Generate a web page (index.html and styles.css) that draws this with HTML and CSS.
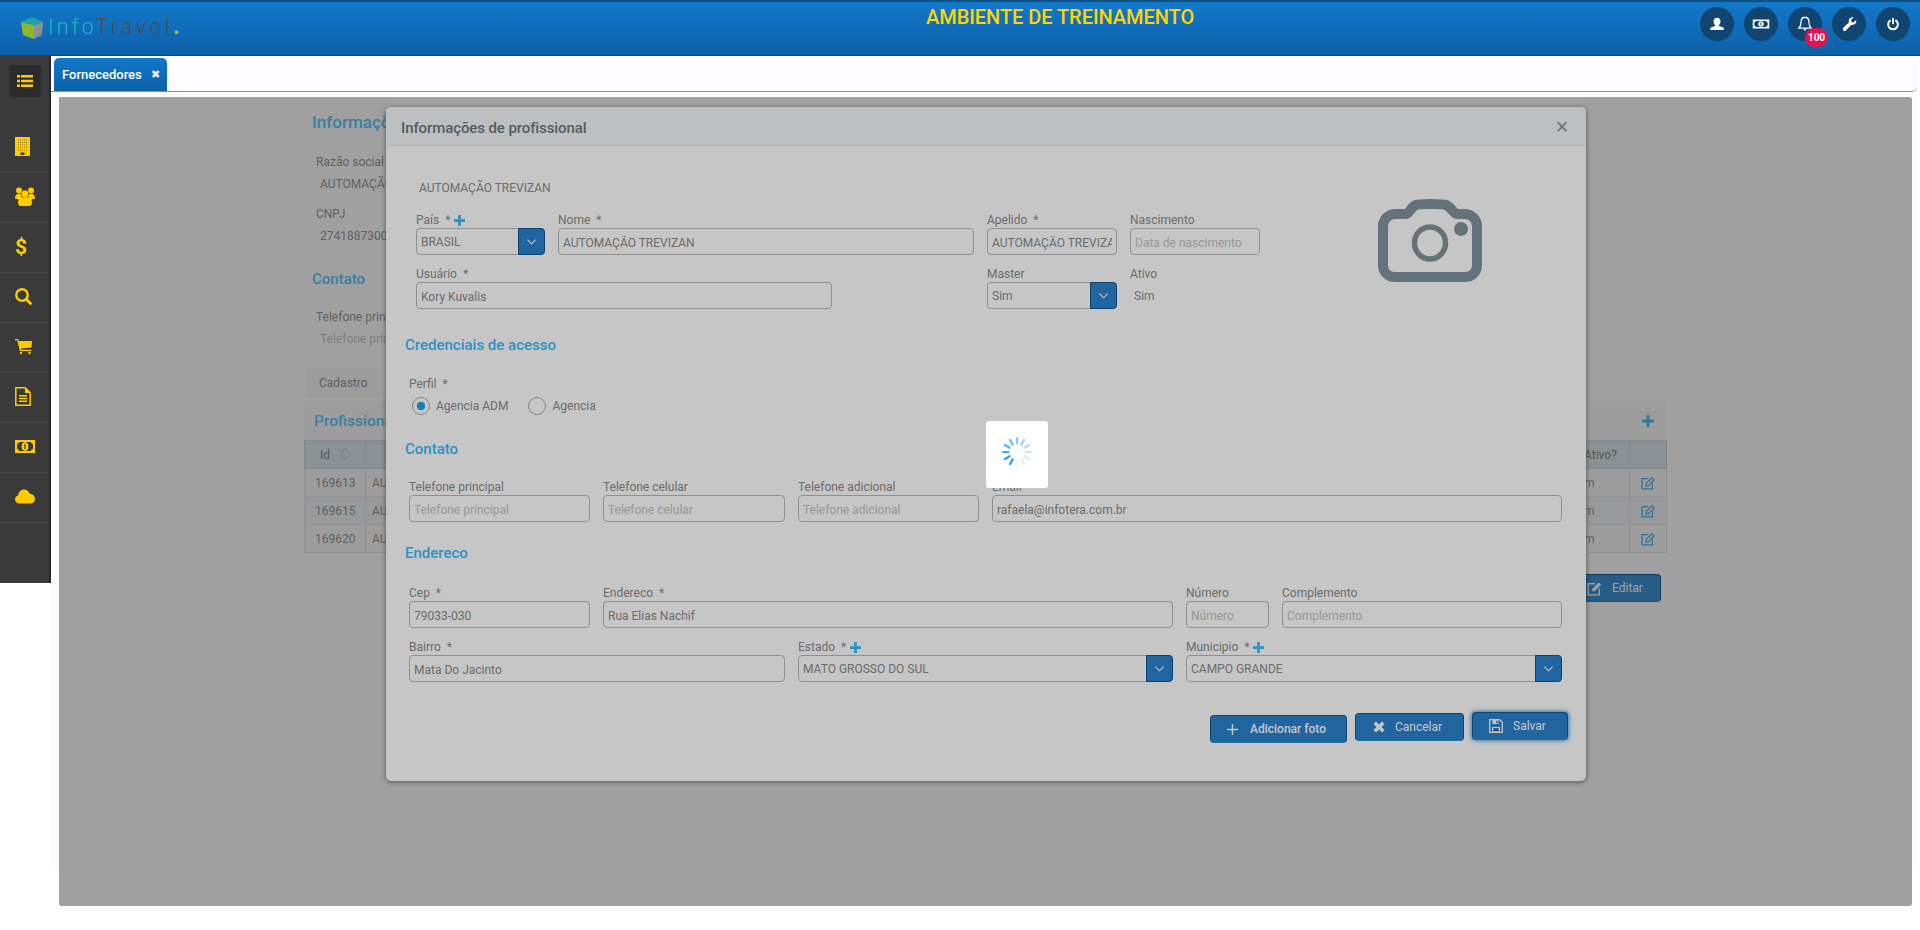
FILE: index.html
```html
<!DOCTYPE html>
<html lang="pt-BR">
<head>
    <meta charset="UTF-8">
    <title>InfoTravel - Fornecedores</title>
    <link rel="stylesheet" href="styles.css">
</head>
<body>
    <header class="topbar">
        <div class="logo">
            <svg class="logo-cube" viewBox="0 0 24 24">
                <path d="M1 6l13 3v14L3 19z" fill="#8fb82c"/>
                <path d="M14 9l9-3-1 13-8 4z" fill="#8b9097"/>
                <path d="M1 6l11-5 11 5-9 3z" fill="#1ea5a6"/>
            </svg>
            <span class="logo-text"><span class="logo-info">Info</span><span class="logo-travel">Travel</span><span class="logo-dot">.</span></span>
        </div>
        <div class="env-title">AMBIENTE DE TREINAMENTO</div>
        <div class="top-actions">
            <a class="round-btn">
                <svg viewBox="0 0 24 24"><path fill="#fff" d="M12 3.500c-3 0-4.600 2.200-4.600 5 0 2 .8 3.700 2.100 4.800v1.500c-2.500 1-6 1.700-6.500 3v2.200h18v-2.200c-.5-1.300-4-2-6.500-3v-1.500c1.300-1.100 2.100-2.800 2.100-4.800 0-2.800-1.600-5-4.600-5z"/></svg>
            </a>
            <a class="round-btn">
                <svg viewBox="0 0 24 24"><path fill="#fff" fill-rule="evenodd" d="M1 6h22v12H1zM5 8c0 1-1 2-2 2v4c1 0 2 1 2 2h14c0-1 1-2 2-2v-4c-1 0-2-1-2-2z"/><circle cx="12" cy="12" r="3.600" fill="#fff"/><path d="M12 10v4" stroke="#0f4570" stroke-width="1.400"/></svg>
            </a>
            <a class="round-btn has-badge">
                <svg viewBox="0 0 24 24"><path fill="none" stroke="#fff" stroke-width="1.700" d="M12 3c-3.500 0-5.200 2.600-5.200 6 0 4-1 6.500-3 8.500h16.400c-2-2-3-4.500-3-8.500 0-3.400-1.700-6-5.200-6z"/><path fill="#fff" d="M10 18.500h4c0 1.200-.9 2-2 2s-2-.8-2-2z"/></svg>
                <span class="badge">100</span>
            </a>
            <a class="round-btn">
                <svg viewBox="0 0 24 24"><path fill="#fff" d="M21.500 6.500c.6 2.300-.1 4.300-1.700 5.600-1.500 1.200-3.300 1.300-4.800.8L8 20.500c-1 1-2.600 1-3.600 0-1-1-1-2.600 0-3.600l7.600-7.300c-.5-1.500-.3-3.400.9-4.800 1.300-1.600 3.400-2.300 5.500-1.700L14.800 6.700l.6 2.600 2.600.6z"/></svg>
            </a>
            <a class="round-btn">
                <svg viewBox="0 0 24 24"><path fill="none" stroke="#fff" stroke-width="2.600" stroke-linecap="round" d="M12 5v6M8 7.500a6.500 6.500 0 1 0 8 0"/></svg>
            </a>
        </div>
    </header>

    <div class="layout">
        <nav class="sidebar">
            <div class="menu-toggle">
                <svg viewBox="0 0 16 12"><path fill="#ffcc00" d="M0 0h3v2.400H0zM4 0h12v2.400H4zM0 4.800h3v2.400H0zM4 4.800h12v2.400H4zM0 9.600h3V12H0zM4 9.600h12V12H4z"/></svg>
            </div>
            <a class="side-item">
                <svg class="ic-building" viewBox="0 0 15 19"><path fill="#ffcc00" d="M0 0h15v19H0z"/><path stroke="#8a7320" stroke-width="1" stroke-dasharray="1 1" d="M3 3h9M3 5.500h9M3 8h9M3 10.500h9M3 13h9"/><path fill="#3a3a3a" d="M5.500 15.500h4V18h-4z"/></svg>
            </a>
            <a class="side-item">
                <svg class="ic-users" viewBox="0 0 20 19"><g fill="#ffcc00"><circle cx="4" cy="3.500" r="3"/><circle cx="16" cy="3.500" r="3"/><path d="M0 12c0-3 1-5 3-5h14c2 0 3 2 3 5h-3v1H3v-1z"/><circle cx="10" cy="7" r="4" stroke="#3a3a3a" stroke-width=".6"/><path d="M3 16c0-3.500 1.500-5.500 4-5.500h6c2.500 0 4 2 4 5.500 0 2-1.500 3-3 3H6c-1.500 0-3-1-3-3z"/></g></svg>
            </a>
            <a class="side-item"><span class="side-dollar">$</span></a>
            <a class="side-item">
                <svg class="ic-search" viewBox="0 0 17 17"><path fill="none" stroke="#ffcc00" stroke-width="2.400" d="M7 1.300a5.700 5.700 0 1 0 0 11.400A5.700 5.700 0 0 0 7 1.300z"/><path stroke="#ffcc00" stroke-width="2.800" stroke-linecap="round" d="M11.500 11.500l4 4"/></svg>
            </a>
            <a class="side-item">
                <svg class="ic-cart" viewBox="0 0 17 15"><path fill="#ffcc00" d="M0 0h3l.6 2H17l-.6 6.500-10.400 1 .3 1.200h10v1.300H4.800L2.300 1.300H0z"/><circle cx="6" cy="14" r="1.200" fill="#ffcc00"/><circle cx="14.500" cy="14" r="1.200" fill="#ffcc00"/></svg>
            </a>
            <a class="side-item">
                <svg class="ic-file" viewBox="0 0 16 19"><path fill="none" stroke="#ffcc00" stroke-width="1.500" d="M.8.800h9.500l4.900 5v12.400H.8z"/><path fill="#ffcc00" d="M10 1l5 5h-5zM4 8h8v1.500H4zM4 10.800h8v1.500H4zM4 13.600h8v1.500H4z"/></svg>
            </a>
            <a class="side-item">
                <svg class="ic-money" viewBox="0 0 20 13"><path fill="#ffcc00" fill-rule="evenodd" d="M0 0h20v13H0zM4 2c0 1.200-1 2-2 2v5c1 0 2 .8 2 2h12c0-1.200 1-2 2-2V4c-1 0-2-.8-2-2z"/><ellipse cx="10" cy="6.500" rx="3.400" ry="4.300" fill="#ffcc00"/><path d="M10 4v5" stroke="#3a3a3a" stroke-width="1.200"/></svg>
            </a>
            <a class="side-item">
                <svg class="ic-cloud" viewBox="0 0 20 14"><path fill="#ffcc00" d="M4.500 14C2 14 0 12.300 0 10c0-2 1.300-3.500 3-3.900C3.500 2.500 6 0 9 0c2.700 0 5 1.800 5.700 4.300C17.700 4.300 20 6.800 20 9.500c0 2.500-2 4.500-4.500 4.500z"/></svg>
            </a>
        </nav>

        <main class="main">
            <div class="tab-strip">
                <div class="main-tab">Fornecedores <span class="tab-close">✖</span></div>
            </div>

            <div class="panel">
                <div class="panel-inner">
                    <div class="info-block">
                        <h3 class="panel-title title-big">Informações</h3>
                        <div class="info-label first">Razão social</div>
                        <div class="info-value">AUTOMAÇÃO TREVIZAN</div>
                        <div class="info-label">CNPJ</div>
                        <div class="info-value">27418873000100</div>
                        <h3 class="panel-title contact-title">Contato</h3>
                        <div class="info-label first-small">Telefone principal</div>
                        <div class="info-value muted">Telefone principal</div>
                    </div>
                    <div class="sub-tabs"><span class="sub-tab">Cadastro</span></div>
                    <div class="pro-head">
                        <h3 class="panel-title title-pro">Profissionais</h3>
                        <svg class="plus" viewBox="0 0 12 12"><path fill="#4fc0f5" d="M4.500 0h3v4.500H12v3H7.500V12h-3V7.500H0v-3h4.500z"/></svg>
                    </div>
                    <table class="pro-table">
                        <colgroup>
                            <col class="col-id">
                            <col>
                            <col class="col-active">
                            <col class="col-edit">
                        </colgroup>
                        <thead>
                            <tr>
                                <th class="th-id">Id
                                    <svg class="sort" viewBox="0 0 12 12"><path fill="none" stroke="#c4cdd2" stroke-width="1.100" d="M1.500 5L6 .8 10.500 5M1.500 7L6 11.200 10.500 7"/></svg>
                                </th>
                                <th></th>
                                <th class="th-active">Ativo?</th>
                                <th></th>
                            </tr>
                        </thead>
                        <tbody>
                            <tr class="row-a">
                                <td class="td-id">169613</td>
                                <td>AUTOMAÇÃO TREVIZAN</td>
                                <td class="td-active">Sim</td>
                                <td class="td-edit"><svg viewBox="0 0 16 16"><path fill="none" stroke="#4fb4ee" stroke-width="1.400" d="M8.500 3H1.200v11.800H13V8"/><path fill="none" stroke="#4fb4ee" stroke-width="1.300" d="M6 8.500l6.500-6.500L15 4.500 8.500 11 5.500 11.500z"/></svg></td>
                            </tr>
                            <tr class="row-b">
                                <td class="td-id">169615</td>
                                <td>AUTOMAÇÃO TREVIZAN</td>
                                <td class="td-active">Sim</td>
                                <td class="td-edit"><svg viewBox="0 0 16 16"><path fill="none" stroke="#4fb4ee" stroke-width="1.400" d="M8.500 3H1.200v11.800H13V8"/><path fill="none" stroke="#4fb4ee" stroke-width="1.300" d="M6 8.500l6.500-6.500L15 4.500 8.500 11 5.500 11.500z"/></svg></td>
                            </tr>
                            <tr class="row-a">
                                <td class="td-id">169620</td>
                                <td>AUTOMAÇÃO TREVIZAN</td>
                                <td class="td-active">Sim</td>
                                <td class="td-edit"><svg viewBox="0 0 16 16"><path fill="none" stroke="#4fb4ee" stroke-width="1.400" d="M8.500 3H1.200v11.800H13V8"/><path fill="none" stroke="#4fb4ee" stroke-width="1.300" d="M6 8.500l6.500-6.500L15 4.500 8.500 11 5.500 11.500z"/></svg></td>
                            </tr>
                        </tbody>
                    </table>
                    <div class="pro-actions">
                        <button class="btn btn-edit">
                            <svg viewBox="0 0 16 16"><path fill="none" stroke="#fff" stroke-width="1.500" d="M8.500 3H1.200v11.800H13V8"/><path fill="#fff" d="M5.500 8.500L12.500 1.500 15 4 8 11H5.500z"/></svg>
                            Editar
                        </button>
                    </div>
                </div>

                <div class="backdrop"></div>

                <div class="modal">
                    <div class="modal-header">
                        <span class="modal-title">Informações de profissional</span>
                        <span class="modal-close">×</span>
                    </div>
                    <div class="modal-body">
                        <div class="pro-name">AUTOMAÇÃO TREVIZAN</div>

                        <div class="top-form">
                            <div class="grid-top">
                                <div class="field">
                                    <label>País &nbsp;* <svg class="plus-sm" viewBox="0 0 12 12"><path fill="#3bbdfc" d="M4.500 0h3v4.500H12v3H7.500V12h-3V7.500H0v-3h4.500z"/></svg></label>
                                    <div class="select"><span>BRASIL</span><span class="select-btn"><svg viewBox="0 0 12 8"><path fill="none" stroke="#fff" stroke-width="1.200" d="M1.500 1.500L6 6l4.500-4.500"/></svg></span></div>
                                </div>
                                <div class="field">
                                    <label>Nome &nbsp;*</label>
                                    <input type="text" value="AUTOMAÇÃO TREVIZAN">
                                </div>
                                <div class="field">
                                    <label>Apelido &nbsp;*</label>
                                    <input type="text" value="AUTOMAÇÃO TREVIZAN">
                                </div>
                                <div class="field">
                                    <label>Nascimento</label>
                                    <input type="text" placeholder="Data de nascimento">
                                </div>
                                <div class="field field-user">
                                    <label>Usuário &nbsp;*</label>
                                    <input type="text" value="Kory Kuvalis">
                                </div>
                                <div class="field">
                                    <label>Master</label>
                                    <div class="select"><span>Sim</span><span class="select-btn"><svg viewBox="0 0 12 8"><path fill="none" stroke="#fff" stroke-width="1.200" d="M1.500 1.500L6 6l4.500-4.500"/></svg></span></div>
                                </div>
                                <div class="field">
                                    <label>Ativo</label>
                                    <div class="plain-value">Sim</div>
                                </div>
                            </div>
                            <svg class="camera" viewBox="0 0 104 83">
                                <path fill="none" stroke="#84939e" stroke-width="10" stroke-linejoin="round" d="M17 15h11c3 0 5-7 10-9 2-1 5-1 14-1s14 0 16 1c5 2 8 9 11 9h8c6 0 12 5 12 12v39c0 7-5 12-12 12H17C10 78 5 73 5 66V27c0-7 6-12 12-12z"/>
                                <ellipse cx="52" cy="44" rx="15.500" ry="16" fill="none" stroke="#84939e" stroke-width="5.500"/>
                                <ellipse cx="83" cy="30" rx="7" ry="7" fill="#84939e"/>
                            </svg>
                        </div>

                        <h4 class="section-title sec-cred">Credenciais de acesso</h4>
                        <div class="perfil">
                            <label>Perfil &nbsp;*</label>
                            <div class="radios">
                                <span class="radio checked"></span><span class="radio-text">Agencia ADM</span>
                                <span class="radio"></span><span class="radio-text">Agencia</span>
                            </div>
                        </div>

                        <h4 class="section-title sec-contact">Contato</h4>
                        <div class="grid-contact">
                            <div class="field"><label>Telefone principal</label><input type="text" placeholder="Telefone principal"></div>
                            <div class="field"><label>Telefone celular</label><input type="text" placeholder="Telefone celular"></div>
                            <div class="field"><label>Telefone adicional</label><input type="text" placeholder="Telefone adicional"></div>
                            <div class="field"><label>Email</label><input type="text" value="rafaela@infotera.com.br"></div>
                        </div>

                        <h4 class="section-title sec-address">Endereco</h4>
                        <div class="grid-address">
                            <div class="field"><label>Cep &nbsp;*</label><input type="text" value="79033-030"></div>
                            <div class="field"><label>Endereco &nbsp;*</label><input type="text" value="Rua Elias Nachif"></div>
                            <div class="field"><label>Número</label><input type="text" placeholder="Número"></div>
                            <div class="field"><label>Complemento</label><input type="text" placeholder="Complemento"></div>
                        </div>
                        <div class="grid-place">
                            <div class="field"><label>Bairro &nbsp;*</label><input type="text" value="Mata Do Jacinto"></div>
                            <div class="field">
                                <label>Estado &nbsp;* <svg class="plus-sm" viewBox="0 0 12 12"><path fill="#3bbdfc" d="M4.500 0h3v4.500H12v3H7.500V12h-3V7.500H0v-3h4.500z"/></svg></label>
                                <div class="select"><span>MATO GROSSO DO SUL</span><span class="select-btn"><svg viewBox="0 0 12 8"><path fill="none" stroke="#fff" stroke-width="1.200" d="M1.500 1.500L6 6l4.500-4.500"/></svg></span></div>
                            </div>
                            <div class="field">
                                <label>Municipio &nbsp;* <svg class="plus-sm" viewBox="0 0 12 12"><path fill="#3bbdfc" d="M4.500 0h3v4.500H12v3H7.500V12h-3V7.500H0v-3h4.500z"/></svg></label>
                                <div class="select"><span>CAMPO GRANDE</span><span class="select-btn"><svg viewBox="0 0 12 8"><path fill="none" stroke="#fff" stroke-width="1.200" d="M1.500 1.500L6 6l4.500-4.500"/></svg></span></div>
                            </div>
                        </div>

                        <div class="modal-actions">
                            <button class="btn btn-photo">
                                <svg viewBox="0 0 12 12"><path fill="#fff" d="M5.200 0h1.600v5.200H12v1.600H6.800V12H5.200V6.800H0V5.200h5.200z"/></svg>
                                Adicionar foto
                            </button>
                            <button class="btn btn-cancel">
                                <svg viewBox="0 0 12 12"><path fill="#fff" d="M3 .5L6 3.500l3-3L11.500 3l-3 3 3 3L9 11.500l-3-3-3 3L.5 9l3-3-3-3z"/></svg>
                                Cancelar
                            </button>
                            <button class="btn btn-save">
                                <svg viewBox="0 0 14 14"><path fill="none" stroke="#fff" stroke-width="1.300" d="M.7.700h10l2.600 2.600v10H.7z"/><path fill="#fff" d="M3.500 1h6v4h-6zM3 8h8v5H3z"/><path fill="#1f65a0" d="M7.300 1.800h1.400v2.400H7.300zM4.200 9.200h5.600v3H4.200z"/></svg>
                                Salvar
                            </button>
                        </div>
                    </div>
                </div>

                <div class="block-overlay"></div>
                <div class="loader">
                    <svg viewBox="-16 -16 32 32">
                        <g stroke="#1c9dff" stroke-width="2.200" stroke-linecap="round">
                            <line x1="0" y1="-8.500" x2="0" y2="-14" opacity=".55"/>
                            <line x1="0" y1="-8.500" x2="0" y2="-14" opacity=".45" transform="rotate(30)"/>
                            <line x1="0" y1="-8.500" x2="0" y2="-14" opacity=".35" transform="rotate(60)"/>
                            <line x1="0" y1="-8.500" x2="0" y2="-14" opacity=".25" transform="rotate(90)"/>
                            <line x1="0" y1="-8.500" x2="0" y2="-14" opacity=".2" transform="rotate(120)"/>
                            <line x1="0" y1="-8.500" x2="0" y2="-14" opacity=".12" transform="rotate(150)"/>
                            <line x1="0" y1="-8.500" x2="0" y2="-14" opacity=".08" transform="rotate(180)"/>
                            <line x1="0" y1="-8.500" x2="0" y2="-14" opacity="1" transform="rotate(210)"/>
                            <line x1="0" y1="-8.500" x2="0" y2="-14" opacity=".95" transform="rotate(240)"/>
                            <line x1="0" y1="-8.500" x2="0" y2="-14" opacity=".85" transform="rotate(270)"/>
                            <line x1="0" y1="-8.500" x2="0" y2="-14" opacity=".75" transform="rotate(300)"/>
                            <line x1="0" y1="-8.500" x2="0" y2="-14" opacity=".65" transform="rotate(330)"/>
                        </g>
                    </svg>
                </div>
            </div>
        </main>
    </div>
</body>
</html>
```

FILE: styles.css
```css
* {
    box-sizing: border-box;
}
body {
    margin: 0;
    background-color: #fff;
    color: #888;
    font-family: Roboto, "Liberation Sans", sans-serif;
    font-size: 12px;
}
svg {
    display: block;
}

/* Topo */
.topbar {
    display: flex;
    height: 56px;
    border-top: 2px solid #10507f;
    border-bottom: 1px solid #0b4a80;
    background: linear-gradient(#1378ca, #0c60a9);
}
.logo {
    display: flex;
    width: 190px;
    margin-left: 20px;
    padding-top: 14px;
}
.logo-cube {
    width: 24px;
    height: 24px;
}
.logo-text {
    margin-left: 4px;
    font-family: Inter, sans-serif;
    font-size: 21px;
    font-weight: 300;
    line-height: 21px;
    letter-spacing: 3px;
    white-space: nowrap;
}
.logo-info {
    color: #1cb0c0;
}
.logo-travel {
    color: #4a4f58;
}
.logo-dot {
    color: #a9c22e;
    font-weight: 700;
}
.env-title {
    margin-left: 716px;
    color: #ffd500;
    font-size: 20px;
    font-weight: 500;
    line-height: 30px;
    letter-spacing: -0.050px;
}
.top-actions {
    display: flex;
    gap: 10px;
    margin-left: auto;
    padding: 5px 10px 0 0;
}
.round-btn {
    position: relative;
    display: flex;
    align-items: center;
    justify-content: center;
    width: 34px;
    height: 34px;
    border-radius: 50%;
    background-color: #0f4570;
}
.round-btn svg {
    width: 18px;
    height: 18px;
}
.badge {
    position: absolute;
    top: 21px;
    left: 17px;
    width: 23px;
    height: 19px;
    border-radius: 10px;
    background-color: #e6104e;
    color: #fff;
    font-size: 10px;
    font-weight: 700;
    line-height: 19px;
    text-align: center;
}

.layout {
    display: flex;
    align-items: flex-start;
}

/* Menu lateral */
.sidebar {
    flex: 0 0 51px;
    height: 527px;
    padding-top: 9px;
    border-right: 2px solid #262626;
    background-color: #3a3a3a;
}
.menu-toggle {
    display: flex;
    align-items: center;
    justify-content: center;
    width: 32px;
    height: 32px;
    margin: 0 0 26px 9px;
    border-radius: 3px;
    background-color: #2b2b2b;
}
.menu-toggle svg {
    width: 16px;
    height: 12px;
}
.side-item {
    display: flex;
    align-items: center;
    width: 48px;
    height: 50px;
    padding: 0 0 2px 15px;
    border-bottom: 1px solid #4b4b4b;
}
.ic-building { width: 15px; height: 19px; }
.ic-users { width: 20px; height: 19px; }
.ic-search { width: 17px; height: 17px; }
.ic-cart { width: 17px; height: 15px; }
.ic-file { width: 16px; height: 19px; }
.ic-money { width: 20px; height: 13px; }
.ic-cloud { width: 20px; height: 15px; }
.side-dollar {
    color: #ffcc00;
    font-size: 21px;
    font-weight: 700;
}

/* Area principal */
.main {
    flex: 0 0 1866px;
    height: 850px;
    border-radius: 0 0 5px 5px;
    background: linear-gradient(#fcfcff 814px, #fff 814px);
}
.tab-strip {
    height: 36px;
    padding: 2px 0 0 3px;
    border-bottom: 1px solid #5b9bd0;
    border-radius: 0 0 5px 0;
}
.main-tab {
    width: 113px;
    height: 33px;
    padding-left: 8px;
    border-radius: 5px 5px 0 0;
    background: linear-gradient(#1378ca, #0c60a9);
    color: #fff;
    font-size: 13px;
    font-weight: 500;
    line-height: 34px;
    white-space: nowrap;
}
.tab-close {
    margin-left: 6px;
    font-family: "DejaVu Sans", sans-serif;
    font-size: 11px;
    vertical-align: 1px;
}

.panel {
    position: relative;
    width: 1853px;
    height: 809px;
    margin: 5px 0 0 8px;
    padding: 13px 0 0 245px;
    border-radius: 0 3px 3px 3px;
    background-color: #fff;
    overflow: hidden;
}
.panel-inner {
    width: 1363px;
}
.info-block {
    padding-left: 8px;
}
.panel-title {
    margin: 0;
    color: #5ccaff;
    font-size: 15px;
    font-weight: 500;
    line-height: 24px;
}
.title-big {
    font-size: 17px;
}
.title-pro {
    font-size: 15.500px;
}
.contact-title {
    margin-top: 22px;
}
.info-label {
    margin-top: 12px;
    padding-left: 4px;
    color: #999;
    font-size: 12px;
    line-height: 18px;
}
.info-label.first {
    margin-top: 19px;
}
.info-label.first-small {
    margin-top: 17px;
}
.info-value {
    margin-top: 4px;
    padding-left: 8px;
    color: #999;
    font-size: 12px;
    line-height: 18px;
}
.info-value.muted {
    color: #c8c8c8;
}
.sub-tabs {
    margin-top: 20px;
    padding-left: 1px;
}
.sub-tab {
    display: block;
    width: 76px;
    height: 30px;
    padding-left: 14px;
    background-color: #f8f8f8;
    color: #999;
    font-size: 12px;
    line-height: 30px;
}
.pro-head {
    display: flex;
    align-items: center;
    justify-content: space-between;
    height: 39px;
    margin-top: 3px;
    padding: 0 13px 0 10px;
    background-color: #f9f9f9;
}
.plus {
    width: 12px;
    height: 12px;
}
.pro-table {
    width: 1363px;
    border-collapse: collapse;
    table-layout: fixed;
    font-size: 12px;
}
.col-id { width: 61px; }
.col-active { width: 130px; }
.col-edit { width: 37px; }
.pro-table th,
.pro-table td {
    height: 28px;
    padding: 0 6px;
    border: 1px solid #e2e6e8;
    color: #999;
    font-weight: 400;
    text-align: left;
}
.pro-table th {
    background-color: #dce8ee;
    border-color: #cbd8de;
    color: #8a8a8a;
}
.th-id {
    padding-left: 15px !important;
}
.sort {
    display: inline-block;
    width: 12px;
    height: 12px;
    margin-left: 6px;
    vertical-align: -1px;
}
.td-id {
    padding-left: 10px !important;
}
.td-active {
    padding-left: 74px !important;
}
.th-active {
    padding-left: 84px !important;
}
.td-edit svg {
    width: 14px;
    height: 14px;
    margin-left: 5px;
}
.row-a td {
    background-color: #fbfbfb;
}
.row-b td {
    background-color: #f2f3f5;
}
.pro-actions {
    display: flex;
    justify-content: flex-end;
    margin: 21px 6px 0 0;
}

/* Botoes */
.btn {
    display: flex;
    align-items: center;
    height: 28px;
    padding: 0;
    border: 1px solid #155a92;
    border-bottom-color: #2a8cc4;
    border-radius: 4px;
    background-color: #2a82cf;
    color: #fff;
    font-family: inherit;
    font-size: 12px;
    line-height: 26px;
}
.btn svg {
    flex: none;
}
.btn-edit {
    width: 110px;
    padding-left: 35px;
    background-color: #3f93d6;
    gap: 10px;
}
.btn-edit svg {
    width: 15px;
    height: 15px;
}

/* Camadas sobre o painel */
.backdrop,
.block-overlay {
    position: absolute;
    inset: 0;
}
.backdrop {
    background-color: rgba(0, 0, 0, 0.19);
}
.block-overlay {
    background-color: rgba(0, 0, 0, 0.224);
}

.modal {
    position: absolute;
    top: 10px;
    left: 327px;
    width: 1200px;
    height: 674px;
    border-radius: 5px;
    background-color: #fff;
    box-shadow: 0 1px 5px rgba(0, 0, 0, 0.5);
}
.modal-header {
    display: flex;
    align-items: center;
    justify-content: space-between;
    height: 39px;
    padding: 4px 18px 0 15px;
    border-bottom: 1px solid #e6e7e8;
    border-radius: 5px 5px 0 0;
    background-color: #f5f6f7;
}
.modal-title {
    color: #6b7880;
    font-size: 15px;
    font-weight: 500;
    letter-spacing: -0.100px;
}
.modal-close {
    margin-top: -3px;
    color: #8f989e;
    font-size: 22px;
    line-height: 20px;
}
.modal-body {
    padding: 32px 19px 0;
}
.pro-name {
    padding: 1px 0 0 14px;
    height: 18px;
    color: #8b8b8b;
    font-size: 12px;
    line-height: 18px;
}
.top-form {
    position: relative;
    margin-top: 14px;
    padding-left: 11px;
}
.camera {
    position: absolute;
    top: -11px;
    left: 973px;
    width: 104px;
    height: 83px;
}
.field label,
.perfil label {
    display: flex;
    align-items: center;
    gap: 1px;
    height: 18px;
    padding-top: 2px;
    color: #8b8b8b;
    font-size: 12px;
    line-height: 16px;
    white-space: pre;
}
.plus-sm {
    width: 11px;
    height: 11px;
}
.field input {
    display: block;
    width: 100%;
    height: 27px;
    padding: 2px 4px 0;
    border: 1px solid #b8b8b8;
    border-radius: 4px;
    background: transparent;
    color: #8b8b8b;
    font-family: inherit;
    font-size: 12px;
    outline: none;
}
.field input::placeholder {
    color: #c4c4c4;
}
.select {
    display: flex;
    justify-content: space-between;
    width: 100%;
    height: 27px;
    padding-left: 4px;
    border: 1px solid #b8b8b8;
    border-radius: 4px;
    color: #8b8b8b;
    font-size: 12px;
    line-height: 27px;
}
.select-btn {
    display: flex;
    align-items: center;
    justify-content: center;
    width: 27px;
    height: 27px;
    margin: -1px -1px 0 0;
    border: 1px solid #13568e;
    border-radius: 0 4px 4px 0;
    background-color: #2a82cf;
}
.select-btn svg {
    width: 11px;
    height: 8px;
}
.plain-value {
    padding: 5px 0 0 4px;
    color: #8b8b8b;
    font-size: 12px;
    line-height: 18px;
}
.grid-top {
    display: grid;
    grid-template-columns: 129px 416px 130px 130px;
    gap: 9px 13px;
    width: 844px;
}
.field-user {
    grid-column: span 2;
    width: 416px;
}
.grid-contact,
.grid-address,
.grid-place {
    display: grid;
    column-gap: 13px;
    width: 1153px;
    margin-left: 4px;
}
.grid-contact {
    grid-template-columns: 181px 182px 181px 570px;
    margin-top: 16px;
}
.grid-address {
    grid-template-columns: 181px 570px 83px 280px;
    margin-top: 18px;
}
.grid-place {
    grid-template-columns: 376px 375px 376px;
    margin-top: 9px;
}
.section-title {
    margin: 0;
    color: #3bbdfc;
    font-size: 15px;
    font-weight: 500;
    line-height: 24px;
}
.sec-cred { margin-top: 24px; }
.sec-contact { margin-top: 22px; }
.sec-address { margin-top: 19px; }
.perfil {
    margin: 17px 0 0 4px;
}
.radios {
    display: flex;
    align-items: center;
    margin: 5px 0 0 3px;
}
.radio {
    width: 18px;
    height: 18px;
    border: 1px solid #aaa;
    border-radius: 50%;
}
.radio.checked {
    background: radial-gradient(circle, #1ba5e8 0, #1ba5e8 4px, transparent 4.500px);
}
.radio-text {
    margin: 0 20px 0 6px;
    color: #8b8b8b;
    font-size: 12px;
}
.modal-actions {
    display: flex;
    align-items: flex-start;
    justify-content: flex-end;
    gap: 8px;
    margin: 30px -1px 0 0;
}
.btn-photo {
    width: 137px;
    margin-top: 3px;
    padding-left: 16px;
    gap: 12px;
    font-weight: 500;
}
.btn-photo svg {
    width: 11px;
    height: 11px;
}
.btn-cancel {
    width: 109px;
    margin-top: 1px;
    padding-left: 17px;
    gap: 10px;
}
.btn-cancel svg {
    width: 12px;
    height: 12px;
}
.btn-save {
    width: 96px;
    padding-left: 16px;
    gap: 10px;
    box-shadow: 0 0 4px 1px #4f9edc;
}
.btn-save svg {
    width: 14px;
    height: 14px;
}

.loader {
    position: absolute;
    top: 324px;
    left: 927px;
    display: flex;
    align-items: center;
    justify-content: center;
    width: 62px;
    height: 67px;
    padding-bottom: 5px;
    border-radius: 3px;
    background-color: #fff;
}
.loader svg {
    width: 32px;
    height: 32px;
}
```
